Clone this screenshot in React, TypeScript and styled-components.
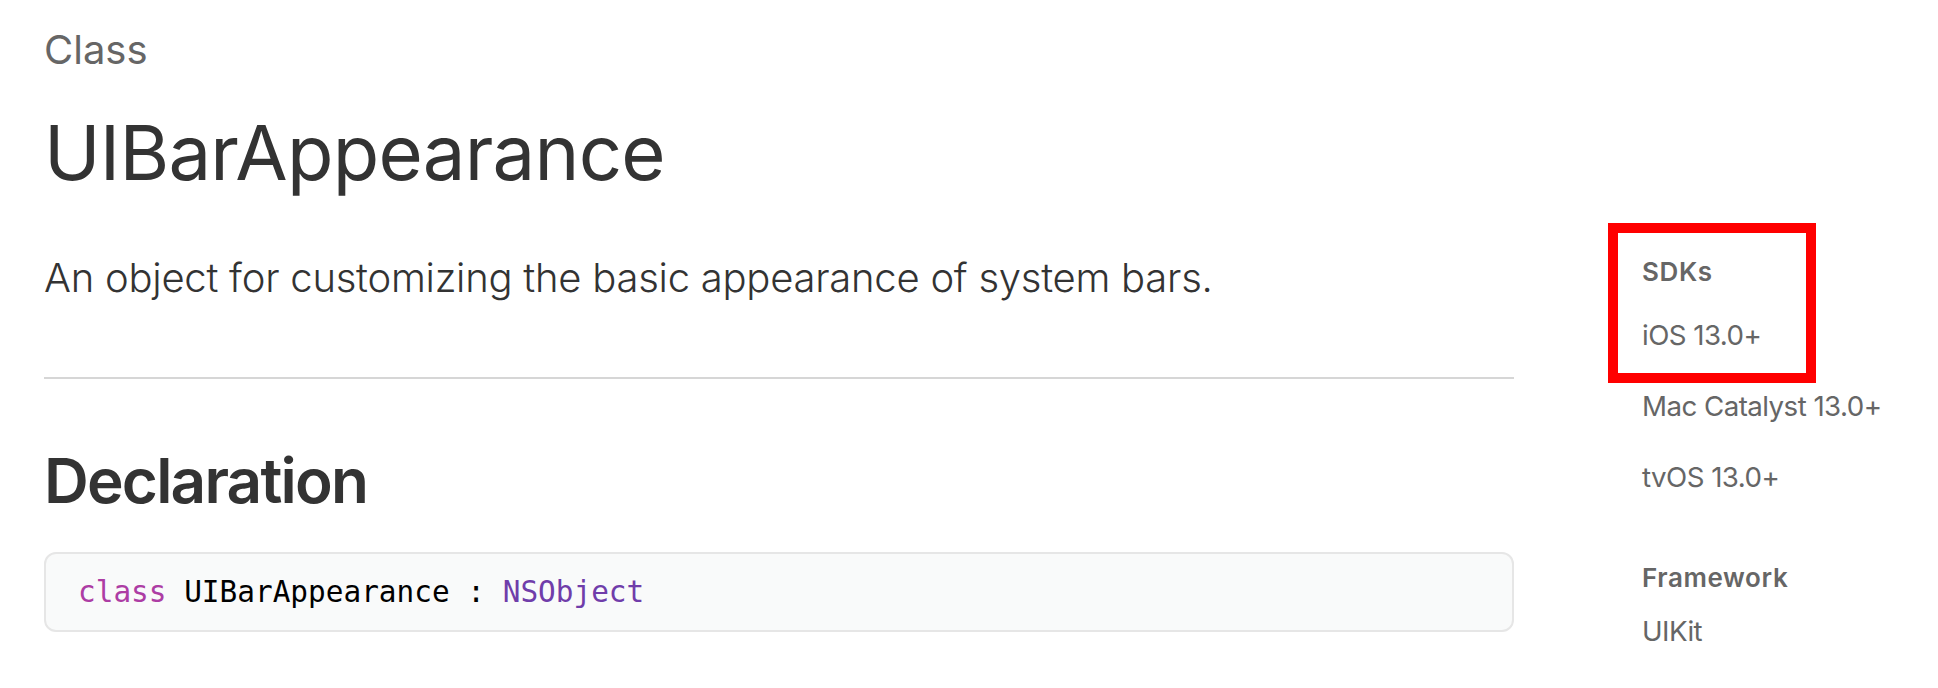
import React from "react";
import styled, { createGlobalStyle } from "styled-components";

const Global = createGlobalStyle`
  html, body { margin: 0; padding: 0; background: #ffffff; }
  body { font-family: Inter, "Noto Sans", "Liberation Sans", sans-serif; -webkit-font-smoothing: antialiased; }
  * { box-sizing: border-box; }
`;

const Page = styled.div`
  width: 1938px;
  height: 688px;
  overflow: hidden;
  padding: 25.5px 0 0 44px;
  background: #fff;
`;

const Eyebrow = styled.div`
  font-size: 40px;
  line-height: 1.2;
  color: #666666;
  font-weight: 400;
`;

const Title = styled.h1`
  margin: 33.3px 0 0;
  font-size: 76px;
  line-height: 1.2;
  font-weight: 400;
  color: #333333;
  letter-spacing: -0.75px;
`;

const Body = styled.div`
  display: grid;
  grid-template-columns: 1470px 250px;
  column-gap: 128px;
  margin-top: 56.5px;
`;

const Main = styled.div`
  display: flex;
  flex-direction: column;
`;

const Abstract = styled.p`
  margin: 0;
  font-size: 40px;
  line-height: 1.2;
  font-weight: 300;
  color: #333333;
  letter-spacing: -0.25px;
`;

const Divider = styled.hr`
  margin: 74.5px 0 0;
  border: none;
  height: 2px;
  background: #d6d6d6;
`;

const SectionTitle = styled.h2`
  margin: 65.3px 0 0;
  font-size: 62px;
  line-height: 1.2;
  font-weight: 600;
  color: #333333;
  letter-spacing: -1.8px;
`;

const CodeBox = styled.pre`
  margin: 33.3px 0 0;
  height: 80px;
  padding: 21.2px 0 0 32px;
  background: #f9fafa;
  border: 2px solid #e6e6e6;
  border-radius: 12px;
  font-family: "DejaVu Sans Mono", "Liberation Mono", monospace;
  font-size: 29.4px;
  line-height: 1.2;
  color: #000000;
`;

const Token = styled.span<{ $kind: "keyword" | "type" }>`
  color: ${(p) => (p.$kind === "keyword" ? "#ad3da4" : "#703daa")};
`;

const Aside = styled.aside`
  display: flex;
  flex-direction: column;
  padding-top: 1.5px;
  color: #666666;
`;

const Group = styled.div<{ $gap: number }>`
  position: relative;
  display: flex;
  flex-direction: column;
  margin-top: ${(p) => p.$gap}px;
`;

const Label = styled.div`
  font-size: 26px;
  line-height: 1.2;
  font-weight: 600;
  letter-spacing: 0.6px;
`;

const Value = styled.div<{ $gap: number }>`
  font-size: 27.7px;
  line-height: 1.2;
  font-weight: 400;
  letter-spacing: -0.55px;
  margin-top: ${(p) => p.$gap}px;
`;

const Highlight = styled.div`
  position: absolute;
  left: -34px;
  top: -33px;
  width: 208px;
  height: 160px;
  border: 10px solid #ff0000;
  pointer-events: none;
`;

export default function App() {
  return (
    <>
      <Global />
      <Page>
        <Eyebrow>Class</Eyebrow>
        <Title>UIBarAppearance</Title>
        <Body>
          <Main>
            <Abstract>An object for customizing the basic appearance of system bars.</Abstract>
            <Divider />
            <SectionTitle>Declaration</SectionTitle>
            <CodeBox>
              <Token $kind="keyword">class</Token> UIBarAppearance : <Token $kind="type">NSObject</Token>
            </CodeBox>
          </Main>
          <Aside>
            <Group $gap={0}>
              <Label>SDKs</Label>
              <Value $gap={32.1}>iOS 13.0+</Value>
              <Highlight />
            </Group>
            <Group $gap={0}>
              <Value $gap={37.8}>Mac Catalyst 13.0+</Value>
              <Value $gap={37.8}>tvOS 13.0+</Value>
            </Group>
            <Group $gap={67.5}>
              <Label>Framework</Label>
              <Value $gap={22}>UIKit</Value>
            </Group>
          </Aside>
        </Body>
      </Page>
    </>
  );
}
